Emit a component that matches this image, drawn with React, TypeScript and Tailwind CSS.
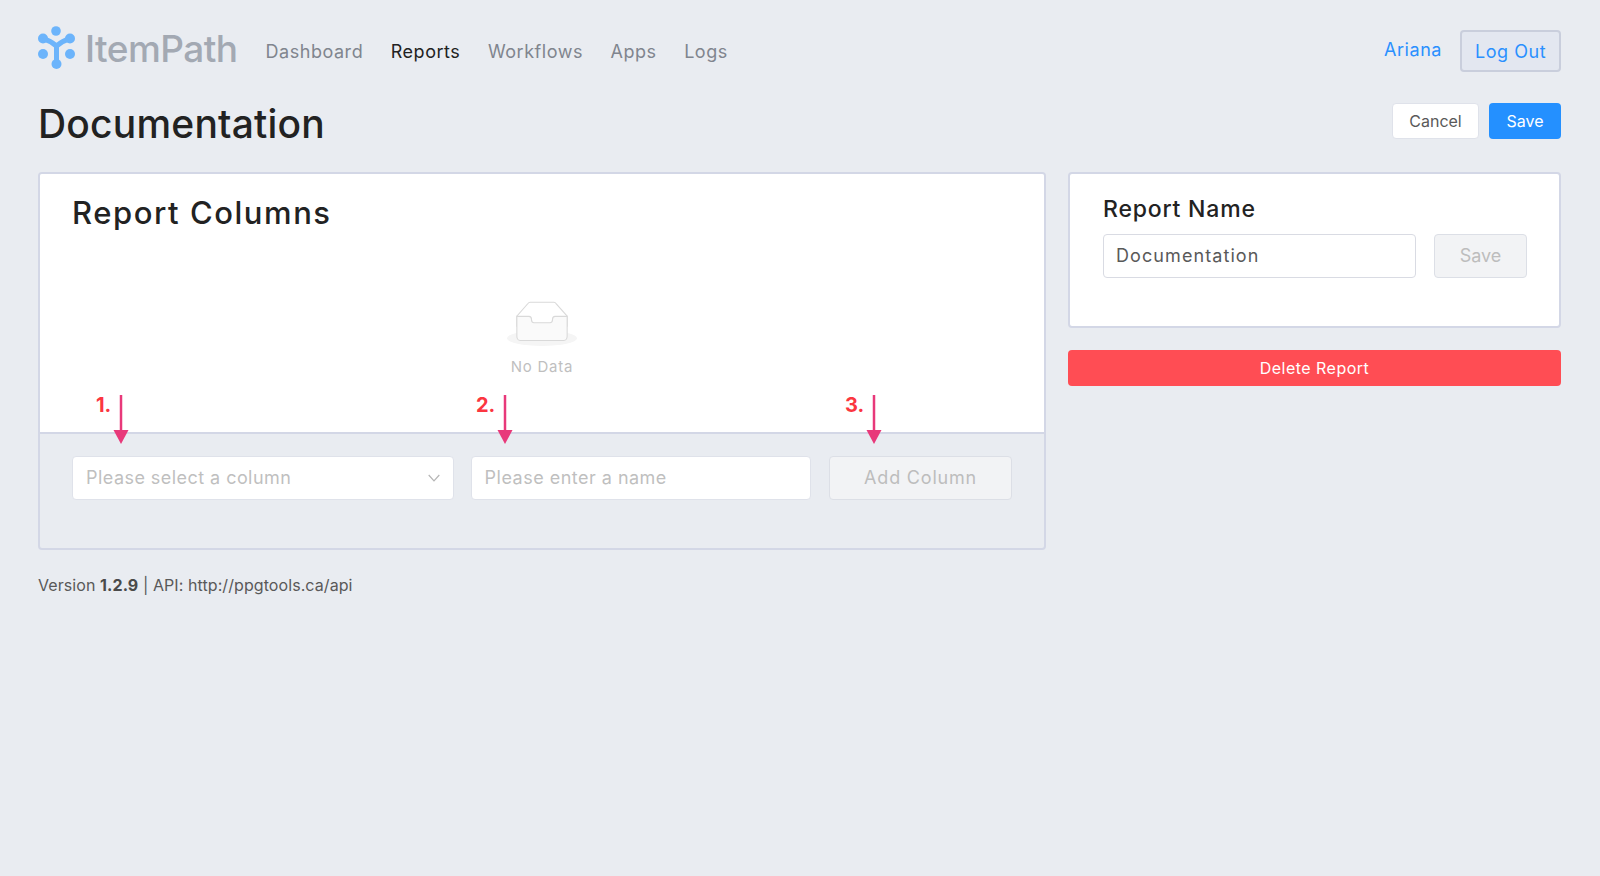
const NAV = [
  { label: 'Dashboard', active: false },
  { label: 'Reports', active: true },
  { label: 'Workflows', active: false },
  { label: 'Apps', active: false },
  { label: 'Logs', active: false },
]

function Logo() {
  return (
    <svg className="mt-[-6px]" width="38" height="44" viewBox="0 0 38 44" fill="none">
      <circle cx="18" cy="5" r="4.8" fill="#6cb4fb" />
      <circle cx="5" cy="12.5" r="5" fill="#6cb4fb" />
      <circle cx="32" cy="12.5" r="5" fill="#6cb4fb" />
      <circle cx="5" cy="28" r="5" fill="#6cb4fb" />
      <circle cx="32" cy="28" r="5" fill="#6cb4fb" />
      <circle cx="18.5" cy="38" r="5" fill="#6cb4fb" />
      <path d="M5 12.5 C10 14 15 17 18.5 20 C22 17 27 14 32 12.5 M18.5 20 V38" stroke="#6cb4fb" strokeWidth="5" />
    </svg>
  )
}

function EmptyImage() {
  return (
    <svg width="70" height="45" viewBox="0 0 64 41">
      <g transform="translate(0 1)" fill="none" fillRule="evenodd">
        <ellipse fill="#f5f5f5" cx="32" cy="33" rx="32" ry="7" />
        <g fillRule="nonzero" stroke="#d9d9d9">
          <path d="M55 12.76L44.854 1.258C44.367.474 43.656 0 42.907 0H21.093c-.749 0-1.46.474-1.947 1.257L9 12.761V22h46v-9.24z" />
          <path
            d="M41.613 15.931c0-1.605.994-2.93 2.227-2.931H55v18.137C55 33.26 53.68 35 52.05 35h-40.1C10.32 35 9 33.259 9 31.137V13h11.16c1.233 0 2.227 1.323 2.227 2.928v.022c0 1.605 1.005 2.901 2.237 2.901h14.752c1.232 0 2.237-1.308 2.237-2.913v-.007z"
            fill="#fafafa"
          />
        </g>
      </g>
    </svg>
  )
}

// Flèche annotée posée par-dessus le formulaire.
function Arrow({ label, className }: { label: string; className: string }) {
  return (
    <div className={`absolute top-[221px] flex items-start gap-[2px] ${className}`}>
      <span className="mt-[-2px] text-[20px] leading-[24px] font-bold text-[#fb3640]">{label}</span>
      <svg width="16" height="50" viewBox="0 0 16 50">
        <path d="M8 0V36" stroke="#e8397a" strokeWidth="2.5" />
        <path d="M0.5 35H15.5L8 49Z" fill="#e8397a" />
      </svg>
    </div>
  )
}

export default function App() {
  return (
    <div className="min-h-[876px] bg-[#e9ecf1] pl-[38px] pr-[39px] pt-[27px] font-['Inter',sans-serif] text-[#222]">
      <header className="flex items-center h-[48px]">
        <Logo />
        <span className="ml-[9px] mt-[-6px] text-[37px] leading-none font-medium tracking-[-0.015em] text-[#a3a9b3]">ItemPath</span>
        <nav className="ml-[28px] mt-[1px] flex gap-[27.5px] text-[18px] tracking-[0.03em] text-[#80858e]">
          {NAV.map((item) => (
            <span key={item.label} className={item.active ? 'text-[#222]' : ''}>
              {item.label}
            </span>
          ))}
        </nav>
        <span className="ml-auto mb-[4px] text-[18px] tracking-[0.03em] text-[#2a90ff]">Ariana</span>
        <button
          type="button"
          className="ml-[18px] h-[42px] w-[101px] rounded-[4px] border-2 border-[#c9cedc] bg-[#e3e7f0] text-[18px] tracking-[0.03em] text-[#2a90ff]"
        >
          Log Out
        </button>
      </header>

      <div className="mt-[28px] flex items-center justify-between h-[36px]">
        <h1 className="mt-[4px] text-[39px] leading-none font-medium tracking-[0.005em]">Documentation</h1>
        <div className="flex gap-[10px]">
          <button type="button" className="h-[36px] w-[87px] rounded-[4px] border border-[#dfe2ea] bg-white text-[16px] text-[#595959]">
            Cancel
          </button>
          <button type="button" className="h-[36px] w-[72px] rounded-[4px] bg-[#2490ff] text-[16px] text-white">
            Save
          </button>
        </div>
      </div>

      <main className="mt-[33px] flex items-start gap-[22px]">
        <section className="relative w-[1008px] h-[378px] rounded-[4px] border-2 border-[#d3d7e6] overflow-hidden">
          <div className="h-[260px] bg-white border-b-2 border-[#d3d7e6] px-[32px] pt-[20px]">
            <h2 className="text-[31px] leading-[38px] font-medium tracking-[0.05em]">Report Columns</h2>
            <div className="mt-[69px] flex flex-col items-center">
              <EmptyImage />
              <p className="mt-[11px] text-[15px] leading-[20px] tracking-[0.05em] text-[#bfbfbf]">No Data</p>
            </div>
          </div>
          <div className="flex gap-[17px] px-[32px] pt-[22px]">
            <div className="flex h-[44px] w-[382px] items-center justify-between rounded-[4px] border border-[#dfe2ea] bg-white pl-[13px] pr-[13px]">
              <span className="pb-[2px] text-[18px] tracking-[0.025em] text-[#bfbfbf]">Please select a column</span>
              <svg width="12" height="8" viewBox="0 0 12 8" fill="none">
                <path d="M0.7 1L6 6.8L11.3 1" stroke="#b5b5b5" strokeWidth="1.2" />
              </svg>
            </div>
            <input
              readOnly
              placeholder="Please enter a name"
              className="h-[44px] w-[341px] rounded-[4px] border border-[#dfe2ea] bg-white pl-[13px] pr-[12px] pb-[2px] text-[18px] tracking-[0.027em] placeholder:text-[#bfbfbf]"
            />
            <button
              type="button"
              className="ml-[1px] h-[44px] w-[183px] rounded-[4px] border border-[#dcdfe6] bg-[#f2f3f5] pb-[2px] text-[18px] tracking-[0.045em] text-[#bdbdbd]"
            >
              Add Column
            </button>
          </div>
          <Arrow label="1." className="left-[56px]" />
          <Arrow label="2." className="left-[436px]" />
          <Arrow label="3." className="left-[805px]" />
        </section>

        <aside className="w-[493px]">
          <div className="h-[156px] rounded-[4px] border-2 border-[#d3d7e6] bg-white pl-[33px] pr-[32px] pt-[19px]">
            <h3 className="text-[23px] leading-[32px] font-medium tracking-[0.035em]">Report Name</h3>
            <div className="mt-[9px] flex justify-between">
              <input
                readOnly
                value="Documentation"
                className="h-[44px] w-[313px] rounded-[4px] border border-[#d9dbe3] bg-white px-[12px] pb-[2px] text-[18px] tracking-[0.06em] text-[#595959]"
              />
              <button
                type="button"
                className="h-[44px] w-[93px] rounded-[4px] border border-[#dcdfe6] bg-[#f2f3f5] pb-[2px] text-[18px] text-[#bdbdbd]"
              >
                Save
              </button>
            </div>
          </div>
          <button type="button" className="mt-[22px] h-[36px] w-full rounded-[4px] bg-[#ff4d54] text-[16px] tracking-[0.03em] text-white">
            Delete Report
          </button>
        </aside>
      </main>

      <footer className="mt-[24px] text-[16px] leading-[22px] tracking-[0.005em] text-[#595959]">
        Version <b className="font-bold text-[#4a4a4a]">1.2.9</b> | API: http://ppgtools.ca/api
      </footer>
    </div>
  )
}
